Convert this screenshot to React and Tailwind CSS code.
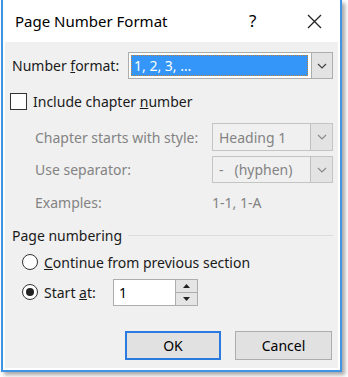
import React from 'react'

const font = { fontFamily: '"Noto Sans", "Open Sans", sans-serif' }

function Chevron({ color = '#444' }) {
  return (
    <svg width="10" height="6" viewBox="0 0 10 6">
      <path d="M1 1 L5 5 L9 1" fill="none" stroke={color} strokeWidth="1.2" />
    </svg>
  )
}

function Combo({ width, height, value, disabled }) {
  return (
    <div
      className={`flex border ${disabled ? 'border-[#c4c4c4] bg-[#f0f0f0]' : 'border-[#adadad] bg-white'}`}
      style={{ width, height }}
    >
      <div className={`flex-1 flex items-center pl-[6px] text-[14px] ${disabled ? 'text-[#838383]' : 'text-black'}`}>
        {value}
      </div>
      <div className="w-[22px] flex items-center justify-center bg-[#e3e3e3] border-l border-[#c0c0c0]">
        <Chevron color={disabled ? '#8a8a8a' : '#444'} />
      </div>
    </div>
  )
}

function Radio({ checked }) {
  return (
    <div className="w-[16px] h-[16px] rounded-full border border-[#333] bg-white flex items-center justify-center">
      {checked && <div className="w-[8px] h-[8px] rounded-full bg-[#222]" />}
    </div>
  )
}

export default function App() {
  return (
    <div className="w-[348px] h-[377px] bg-white pl-[1px]" style={font}>
      <div className="w-[341px] h-[372px] border-2 border-t-0 border-[#3f94e4] bg-white px-[2px] pb-[2px] flex flex-col shadow-[3px_3px_4px_rgba(0,0,0,0.35)]">
        {/* заголовок */}
        <div className="h-[42px] flex items-center pl-[10px] text-[15px] text-black">
          <span className="w-[234px]">Page Number Format</span>
          <span className="text-[17px] w-[58px]">?</span>
          <svg width="15" height="15" viewBox="0 0 15 15">
            <path d="M1 1 L14 14 M14 1 L1 14" stroke="#222" strokeWidth="1.3" />
          </svg>
        </div>

        <div className="flex-1 bg-[#f0f0f0] flex flex-col text-[14px] text-[#1a1a1a]">
          {/* формат номера */}
          <div className="mt-[10px] h-[27px] flex items-center">
            <span className="ml-[7px] w-[116px]">
              Number <u>f</u>ormat:
            </span>
            <div className="w-[205px] h-[27px] flex border border-[#adadad] bg-white">
              <div className="flex-1 m-[2px] mr-[3px] bg-[#3396f8] text-white flex items-center pl-[3px] outline-1 outline-dotted outline-[#c08040] -outline-offset-1">
                1, 2, 3, …
              </div>
              <div className="w-[22px] my-[-1px] mr-[-1px] flex items-center justify-center bg-[#e3e3e3] border border-[#adadad]">
                <Chevron />
              </div>
            </div>
          </div>

          {/* номер главы */}
          <div className="mt-[14px] h-[16px] flex items-center">
            <div className="ml-[5px] w-[17px] h-[17px] border border-[#333] bg-white" />
            <span className="ml-[6px]">
              Include chapter <u>n</u>umber
            </span>
          </div>

          <div className="mt-[14px] h-[28px] flex items-center text-[#838383]">
            <span className="ml-[30px] w-[177px]">Chapter starts with style:</span>
            <Combo width={121} height={28} value="Heading 1" disabled />
          </div>

          <div className="mt-[5px] h-[27px] flex items-center text-[#838383]">
            <span className="ml-[30px] w-[177px]">Use separator:</span>
            <Combo width={121} height={27} value={<span>-&nbsp;&nbsp;&nbsp;(hyphen)</span>} disabled />
          </div>

          <div className="mt-[9px] h-[20px] flex items-center text-[#838383]">
            <span className="ml-[30px] w-[177px]">Examples:</span>
            <span>1-1, 1-A</span>
          </div>

          {/* нумерация страниц */}
          <div className="mt-[13px] h-[20px] flex items-center">
            <span className="ml-[7px] w-[116px]">Page numbering</span>
            <div className="w-[205px] h-px bg-[#dcdcdc]" />
          </div>

          <div className="mt-[7px] h-[20px] flex items-center">
            <div className="ml-[17px]">
              <Radio />
            </div>
            <span className="ml-[6px]">
              <u>C</u>ontinue from previous section
            </span>
          </div>

          <div className="mt-[6px] h-[28px] flex items-center">
            <div className="ml-[17px]">
              <Radio checked />
            </div>
            <span className="ml-[6px] w-[69px]">
              Start <u>a</u>t:
            </span>
            <div className="w-[85px] h-[27px] flex border border-[#adadad] bg-white">
              <div className="flex-1 flex items-center pl-[5px] text-black">1</div>
              <div className="w-[22px] flex flex-col border-l border-[#adadad]">
                <div className="flex-1 bg-[#e5e5e5] border-b border-[#adadad] flex items-center justify-center">
                  <svg width="7" height="4" viewBox="0 0 7 4"><path d="M0 4 L3.5 0 L7 4 Z" fill="#222" /></svg>
                </div>
                <div className="flex-1 bg-[#e5e5e5] flex items-center justify-center">
                  <svg width="7" height="4" viewBox="0 0 7 4"><path d="M0 0 L3.5 4 L7 0 Z" fill="#222" /></svg>
                </div>
              </div>
            </div>
          </div>

          {/* кнопки */}
          <div className="mt-[25px] h-[29px] flex">
            <button className="ml-[120px] w-[96px] h-[29px] border-2 border-[#2b7ae0] bg-[#e1e1e1] text-[14px] text-black">
              OK
            </button>
            <button className="ml-[14px] w-[97px] h-[29px] border border-[#adadad] bg-[#e1e1e1] text-[14px] text-black">
              Cancel
            </button>
          </div>
        </div>
      </div>
    </div>
  )
}
